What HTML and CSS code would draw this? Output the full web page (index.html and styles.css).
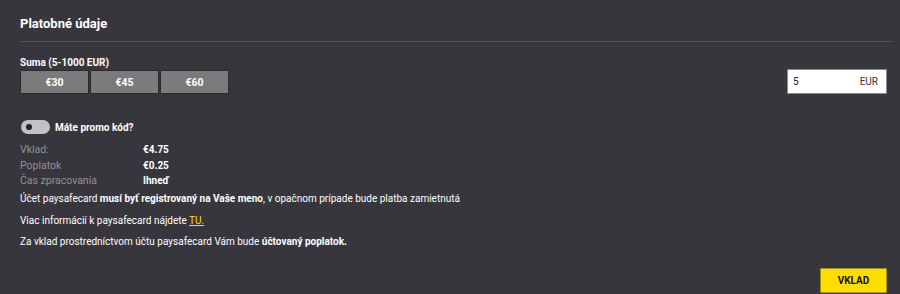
FILE: index.html
```html
<!DOCTYPE html>
<html lang="sk">
<head>
  <meta charset="UTF-8" />
  <title>Platobné údaje</title>
  <link rel="stylesheet" href="styles.css">
</head>
<body>
  <div class="payment">
    <h2 class="payment-title">Platobné údaje</h2>

    <div class="amount-label">Suma (5-1000 EUR)</div>
    <div class="amount-row">
      <div class="presets">
        <button class="preset">€30</button>
        <button class="preset">€45</button>
        <button class="preset">€60</button>
      </div>
      <label class="amount-input">
        <input type="text" value="5" />
        <span class="currency">EUR</span>
      </label>
    </div>

    <div class="promo">
      <span class="toggle"><span class="knob"></span></span>
      <span class="promo-text">Máte promo kód?</span>
    </div>

    <div class="summary">
      <div class="summary-row"><span class="key">Vklad:</span><span class="val">€4.75</span></div>
      <div class="summary-row"><span class="key">Poplatok</span><span class="val">€0.25</span></div>
      <div class="summary-row"><span class="key">Čas zpracovania</span><span class="val">Ihneď</span></div>
    </div>

    <p class="note">Účet paysafecard <b>musí byť registrovaný na Vaše meno</b>, v opačnom prípade bude platba zamietnutá</p>
    <p class="note">Viac informácií k paysafecard nájdete <a href="#">TU.</a></p>
    <p class="note">Za vklad prostredníctvom účtu paysafecard Vám bude <b>účtovaný poplatok.</b></p>

    <div class="actions">
      <button class="submit">VKLAD</button>
    </div>
  </div>
</body>
</html>
```

FILE: styles.css
```css
body {
  margin: 0;
  background: #37363c;
  font-family: Roboto, "Liberation Sans", sans-serif;
  color: #fff;
  font-size: 10px;
}

.payment {
  padding: 0 13px 0 20px;
}

.payment-title {
  margin: 0 -6px 0 0;
  padding: 15px 0 9px;
  font-size: 13px;
  font-weight: bold;
  line-height: 17px;
  border-bottom: 1px solid #55545a;
}

.amount-label {
  margin-top: 14px;
  font-weight: bold;
  line-height: 13px;
}

.amount-row {
  display: flex;
  justify-content: space-between;
  align-items: flex-start;
  margin-top: 1px;
}

.presets {
  display: flex;
  gap: 1px;
}

.preset {
  width: 69px;
  height: 24px;
  background: #7b7b7b;
  border: 1px solid #2b2a2f;
  border-radius: 1px;
  color: #fff;
  font-family: inherit;
  font-size: 10.5px;
  font-weight: bold;
  cursor: pointer;
}

.amount-input {
  display: flex;
  align-items: center;
  width: 100px;
  height: 25px;
  box-sizing: border-box;
  background: #fff;
  border: 1px solid #8a8a8a;
  margin-top: -1px;
  padding: 0 8px 0 5px;
}

.amount-input input {
  flex: 1;
  min-width: 0;
  border: 0;
  outline: 0;
  padding: 0;
  font-family: inherit;
  font-size: 10px;
  color: #222;
}

.currency {
  color: #333;
}

.promo {
  display: flex;
  align-items: center;
  gap: 5px;
  height: 14px;
  margin-top: 26px;
}

.toggle {
  display: flex;
  align-items: center;
  width: 29px;
  height: 14px;
  margin-left: 1px;
  border-radius: 7px;
  background: #c2c2c2;
}

.knob {
  width: 6px;
  height: 6px;
  margin-left: 5px;
  border-radius: 50%;
  background: #222;
}

.promo-text {
  font-weight: bold;
}

.summary {
  margin-top: 8px;
}

.summary-row {
  display: flex;
  line-height: 15.5px;
}

.summary-row .key {
  width: 123px;
  color: #929197;
  font-size: 10.5px;
}

.summary-row .val {
  font-weight: bold;
}

.note {
  margin: 2.5px 0 0;
  line-height: 16px;
}

.note + .note {
  margin-top: 5.5px;
}

.note a {
  color: #ffdd00;
}

.actions {
  display: flex;
  justify-content: flex-end;
  margin-top: 18px;
}

.submit {
  width: 67px;
  height: 25px;
  background: #ffdd00;
  border: 1px solid #a89400;
  border-radius: 1px;
  color: #111;
  font-family: inherit;
  font-size: 10px;
  font-weight: bold;
  cursor: pointer;
}
```
